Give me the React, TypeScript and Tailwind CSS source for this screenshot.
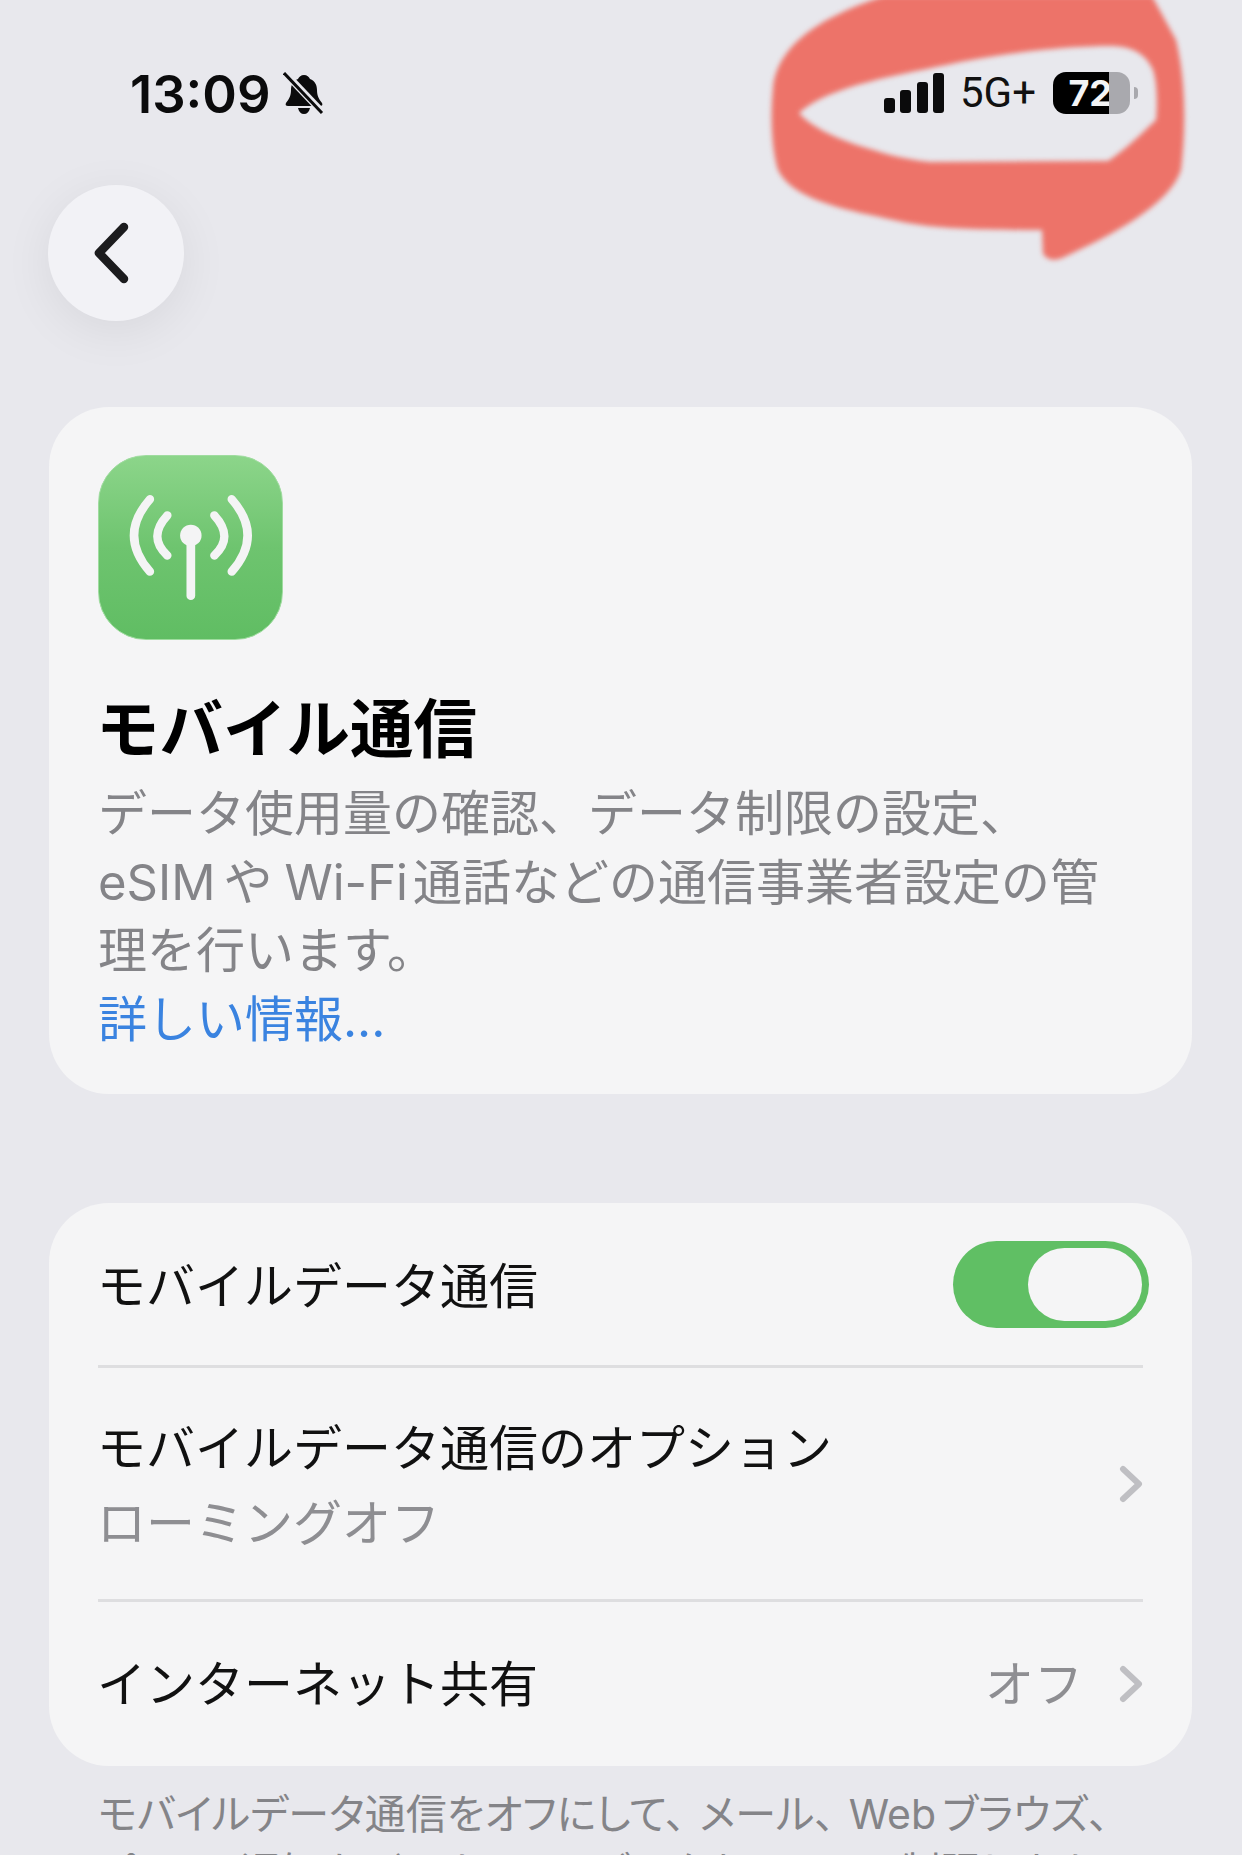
const FONT = `font-['Inter','Noto_Sans_CJK_JP',sans-serif]`;

function Chevron({ className = "" }: { className?: string }) {
  return (
    <svg className={className} width="24" height="38" viewBox="0 0 24 38" fill="none" stroke="#bfbfc3" strokeWidth="6" strokeLinecap="round" strokeLinejoin="round">
      <path d="M4 4l16 15L4 34" />
    </svg>
  );
}

function StatusBar() {
  return (
    <div className="flex h-[185px] items-start justify-between pl-[130px] pr-[104px] pt-[65px]">
      <div className="flex items-center gap-[12px]">
        <span className="text-[52.5px] leading-[58px] font-semibold text-[#0b0b0c] font-['Inter',sans-serif]">13:09</span>
        {/* muted bell */}
        <svg width="42" height="44" viewBox="0 0 42 44" className="-mt-[1px]">
          <path d="M21 3c3 0 5 2 6 4 5 2 7 6 7 11 0 6 2 9 5 13 1 2 0 3-2 3H5c-2 0-3-1-2-3 3-4 5-7 5-13 0-5 2-9 7-11 1-2 3-4 6-4z" fill="#0b0b0c" />
          <path d="M15 36h12c-1 4-3 6-6 6s-5-2-6-6z" fill="#0b0b0c" />
          <path d="M3 2l37 39" stroke="#e8e8ed" strokeWidth="7" />
          <path d="M1 1l38 40" stroke="#0b0b0c" strokeWidth="3" />
        </svg>
      </div>
      <div className="flex items-center pt-[7px]">
        <svg width="60" height="40" viewBox="0 0 60 40" fill="#0b0b0c">
          <rect x="0" y="25" width="11" height="15" rx="3" />
          <rect x="16" y="17" width="11" height="23" rx="3" />
          <rect x="33" y="9" width="11" height="31" rx="3" />
          <rect x="49" y="0" width="11" height="40" rx="3" />
        </svg>
        <span className="ml-[16px] text-[42px] leading-[42px] text-[#111] font-['Roboto',sans-serif]">5G+</span>
        <div className="ml-[17px] flex items-center">
          <div className="flex h-[42px] w-[77px]">
            <div className="flex h-full w-[56px] items-center justify-end rounded-l-[13px] bg-black">
              <span className="-mr-[3px] text-[36px] leading-[42px] font-bold text-[#f4f4f5] font-['Inter',sans-serif]">72</span>
            </div>
            <div className="h-full w-[21px] rounded-r-[13px] bg-[#a9a9ae]" />
          </div>
          <div className="ml-[4px] h-[12px] w-[4px] rounded-r-full bg-[#a9a9ae]" />
        </div>
      </div>
    </div>
  );
}

// red marker scribble drawn over the status bar
function Scribble() {
  return (
    <svg className="absolute left-0 top-0" width="1242" height="280" viewBox="0 0 1242 280">
      <path
        fillRule="evenodd"
        fill="#ed7369"
        style={{ filter: "blur(2.5px)" }}
        d="M884 -4C830 14 778 40 773 88C770 120 772 150 778 170C790 195 830 207 880 217C915 225 935 230 1042 230L1043 254Q1050 263 1062 258C1110 236 1170 205 1181 170C1186 130 1186 80 1176 40L1152 -4ZM799 113C830 85 900 75 960 62C1020 50 1080 46 1110 46C1132 46 1146 54 1153 70C1158 85 1157 110 1156 120C1140 135 1125 150 1108 161L930 162C900 159 880 152 860 146C835 138 810 126 799 113Z"
      />
    </svg>
  );
}

function AntennaIcon() {
  return (
    <div className="h-[185px] w-[185px] rounded-[48px] border border-[#9fdc9f] bg-linear-to-b from-[#8cd58a] via-[#6ec46f] to-[#60bd63]">
      <svg width="183" height="183" viewBox="118 78 546 546" fill="none" stroke="#f4f4f5" strokeLinecap="round">
        <path d="M270 207Q175 315 270 423" strokeWidth="25" />
        <path d="M322 255Q262 320 322 375" strokeWidth="25" />
        <path d="M514 207Q609 315 514 423" strokeWidth="25" />
        <path d="M462 255Q522 320 462 375" strokeWidth="25" />
        <path d="M392 325V495" strokeWidth="26" />
        <circle cx="392" cy="315" r="32" fill="#f4f4f5" stroke="none" />
      </svg>
    </div>
  );
}

export default function App() {
  return (
    <div className={`relative h-[1855px] w-[1242px] overflow-hidden bg-[#e8e8ed] ${FONT}`}>
      <StatusBar />
      <Scribble />

      <div className="pl-[48px]">
        <button className="flex h-[136px] w-[136px] items-center justify-center rounded-full bg-[#f2f2f6] shadow-[0_10px_50px_rgba(0,0,0,0.07)]">
          <svg width="48" height="68" viewBox="0 0 48 68" fill="none" stroke="#1c1c1e" strokeWidth="8.5" strokeLinecap="round" strokeLinejoin="round" className="-ml-[8px]">
            <path d="M36 8L11 34l25 26" />
          </svg>
        </button>
      </div>

      <div className="ml-[49px] mr-[50px] mt-[86px] h-[687px] rounded-[60px] bg-[#f5f5f6] pl-[49px] pt-[48px]">
        <AntennaIcon />
        <h1 className="mt-[52px] -ml-[2px] text-[63.5px] leading-[74px] font-bold whitespace-nowrap text-black">モバイル通信</h1>
        <p className="mt-[14px] text-[49px] leading-[68.5px] whitespace-nowrap text-[#848488]">
          データ使用量の確認、データ制限の設定、
          <br />
          eSIM<span className="ml-[8px]">や</span><span className="ml-[12px]">Wi-Fi</span><span className="ml-[5px]">通話などの通信事業者設定の管</span>
          <br />
          理を行います。
          <br />
          <span className="text-[#3a83e0]">詳しい情報...</span>
        </p>
      </div>

      <div className="ml-[49px] mr-[50px] mt-[109px] h-[563px] rounded-[60px] bg-[#f5f5f6] pl-[49px] pr-[49px]">
        <div className="flex h-[162px] items-center justify-between">
          <span className="-ml-[1px] mt-[5px] text-[49px] leading-[60px] whitespace-nowrap text-[#111]">モバイルデータ通信</span>
          <div className="-mr-[6px] flex h-[87px] w-[196px] items-center justify-end rounded-full bg-[#60bf64] pr-[7px]">
            <div className="h-[73px] w-[114px] rounded-full bg-[#f5f5f6]" />
          </div>
        </div>
        <div className="h-[3px] bg-[#dedee0]" />
        <div className="flex h-[231px] items-center justify-between">
          <div className="-ml-[1px] mt-[5px]">
            <div className="text-[49px] leading-[60px] whitespace-nowrap text-[#111]">モバイルデータ通信のオプション</div>
            <div className="mt-[15px] text-[49px] leading-[60px] whitespace-nowrap text-[#8e8e92]">ローミングオフ</div>
          </div>
          <Chevron />
        </div>
        <div className="h-[3px] bg-[#dedee0]" />
        <div className="flex h-[164px] items-center justify-between">
          <span className="-ml-[1px] mt-[2px] text-[49px] leading-[60px] whitespace-nowrap text-[#111]">インターネット共有</span>
          <div className="flex items-center gap-[36px]">
            <span className="mt-[2px] text-[49px] leading-[60px] text-[#8e8e92]">オフ</span>
            <Chevron />
          </div>
        </div>
      </div>

      <p className="mt-[19px] pl-[98px] text-[41px] leading-[58px] whitespace-nowrap text-[#848488] [font-feature-settings:'palt']">
        モバイルデータ通信をオフにして、<span className="ml-[14px]">メール、</span><span className="ml-[14px]">Web</span><span className="ml-[6px]">ブラウズ、</span>
        <br />
        プッシュ通知などのすべてのデータを<span className="ml-[6px]">Wi-Fi</span><span className="ml-[6px]">に制限します。</span>
      </p>
    </div>
  );
}
